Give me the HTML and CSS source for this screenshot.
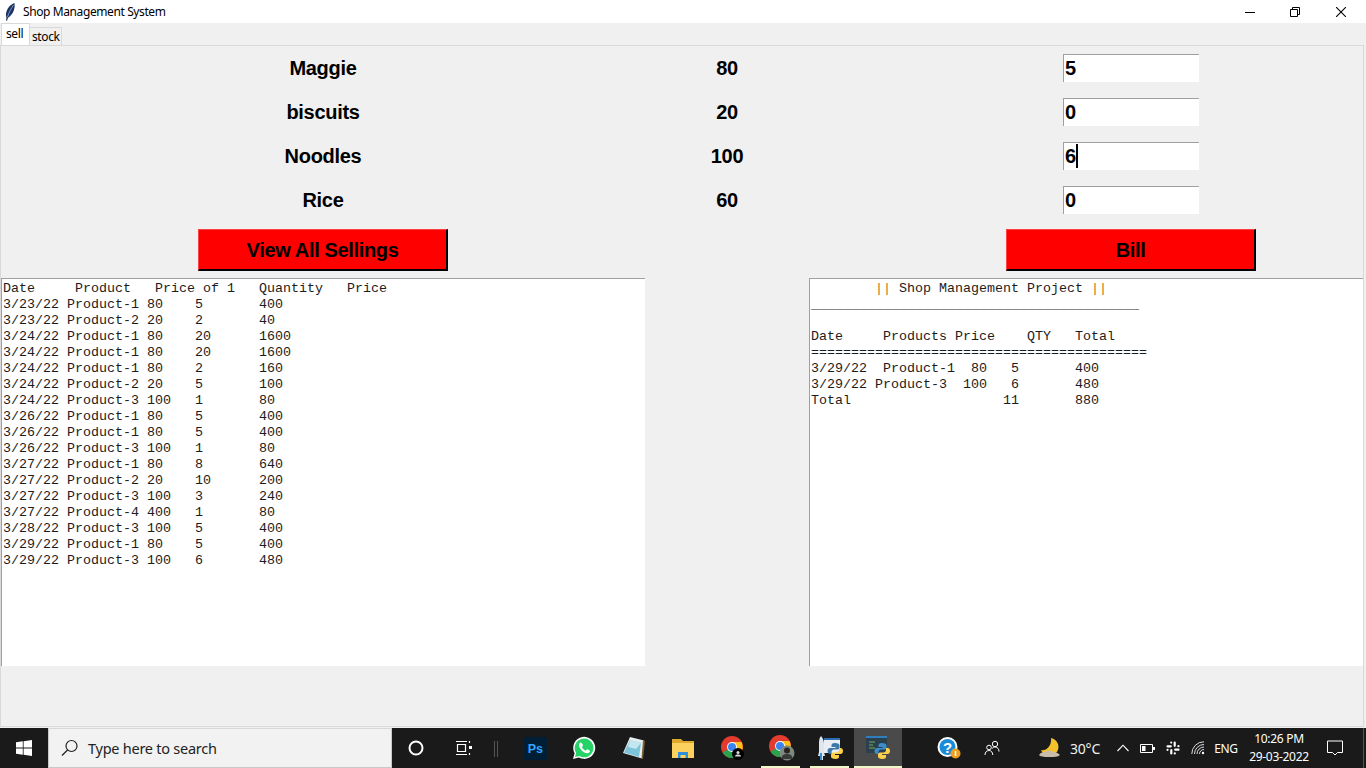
FILE: index.html
```html
<!DOCTYPE html>
<html lang="en">
<head>
  <meta charset="UTF-8" />
  <title>Shop Management System</title>
  <link rel="stylesheet" href="styles.css">
</head>
<body>
  <div class="titlebar">
    <svg class="feather" width="16" height="18" viewBox="0 0 16 18">
      <path d="M12.500 0C8 1.500 4.500 6 4 11c-.1 1.500 0 2.500.5 3.500L4 17.500l1 .3 1-3C10 12 13.500 7 12.500 0z" fill="#1c3260"/>
      <path d="M11.500 2C9.500 5 7 9 5.500 14" stroke="#7fa6e0" stroke-width=".9" fill="none"/>
    </svg>
    <span class="title">Shop Management System</span>
    <div class="winbtns">
      <svg width="10" height="10" viewBox="0 0 10 10"><path d="M0 5.500h10" stroke="#000"/></svg>
      <svg width="10" height="10" viewBox="0 0 10 10"><path d="M.5 2.500h7v7h-7zM2.500 2.500V.5h7v7H7.500" stroke="#000" fill="none"/></svg>
      <svg width="10" height="10" viewBox="0 0 10 10"><path d="M0 0l10 10M10 0L0 10" stroke="#000" stroke-width="1.100"/></svg>
    </div>
  </div>

  <div class="tabs">
    <div class="tab active">sell</div>
    <div class="tab">stock</div>
  </div>

  <div class="pane">
    <div class="sheet">
      <div class="cell name">Maggie</div>
      <div class="cell name">80</div>
      <div class="cell"><div class="entry">5</div></div>

      <div class="cell name">biscuits</div>
      <div class="cell name">20</div>
      <div class="cell"><div class="entry">0</div></div>

      <div class="cell name">Noodles</div>
      <div class="cell name">100</div>
      <div class="cell"><div class="entry">6<span class="caret"></span></div></div>

      <div class="cell name">Rice</div>
      <div class="cell name">60</div>
      <div class="cell"><div class="entry">0</div></div>

      <div class="cell btnrow"><button class="btn">View All Sellings</button></div>
      <div class="cell btnrow"></div>
      <div class="cell btnrow"><button class="btn">Bill</button></div>

      <pre class="box">Date     Product   Price of 1   Quantity   Price
3/23/22 Product-1 80    5       400
3/23/22 Product-2 20    2       40
3/24/22 Product-1 80    20      1600
3/24/22 Product-1 80    20      1600
3/24/22 Product-1 80    2       160
3/24/22 Product-2 20    5       100
3/24/22 Product-3 100   1       80
3/26/22 Product-1 80    5       400
3/26/22 Product-1 80    5       400
3/26/22 Product-3 100   1       80
3/27/22 Product-1 80    8       640
3/27/22 Product-2 20    10      200
3/27/22 Product-3 100   3       240
3/27/22 Product-4 400   1       80
3/28/22 Product-3 100   5       400
3/29/22 Product-1 80    5       400
3/29/22 Product-3 100   6       480</pre>
      <div></div>
      <pre class="box">        <span class="bars">||</span> Shop Management Project <span class="bars">||</span>
_________________________________________

Date     Products Price    QTY   Total
==========================================
3/29/22  Product-1  80   5       400
3/29/22 Product-3  100   6       480
Total                   11       880</pre>
    </div>
  </div>

  <div class="taskbar">
    <div class="tb start">
      <svg width="16" height="16" viewBox="0 0 16 16"><path d="M0 2.300l6.800-1v6.300H0zM7.600 1.200L16 0v7.600H7.600zM0 8.400h6.800v6.300l-6.800-1zM7.600 8.400H16V16l-8.400-1.200z" fill="#fff"/></svg>
    </div>
    <div class="search">
      <svg width="18" height="18" viewBox="0 0 18 18"><circle cx="10.500" cy="7" r="5.500" fill="none" stroke="#222" stroke-width="1.200"/><path d="M6.500 11L1 16.500" stroke="#222" stroke-width="1.300"/></svg>
      <span>Type here to search</span>
    </div>
    <div class="tb">
      <svg width="16" height="16" viewBox="0 0 16 16"><circle cx="8" cy="8" r="6.500" fill="none" stroke="#fff" stroke-width="2"/></svg>
    </div>
    <div class="tb">
      <svg width="18" height="16" viewBox="0 0 18 16"><path d="M1 1.500h11M1 14.500h11M2.500 4.500h8v7h-8z" fill="none" stroke="#fff" stroke-width="1.200"/><path d="M14.500 1v2M14.500 13v2" stroke="#fff" stroke-width="1.200"/><rect x="14" y="6" width="3" height="3" fill="#fff"/></svg>
    </div>
    <div class="divider"></div>

    <div class="app">
      <svg width="23" height="23" viewBox="0 0 24 24"><rect width="24" height="24" rx="3" fill="#001e36"/><text x="4" y="17" class="ps">Ps</text></svg>
    </div>
    <div class="app shift-left">
      <svg width="24" height="24" viewBox="0 0 24 24"><path d="M1 23l1.600-5.800A11 11 0 1 1 6.900 21.500z" fill="#fff"/><path d="M3 21l1.100-4.100A9.400 9.400 0 1 1 7.300 20z" fill="#25d366"/><path d="M8.800 6.500c-.6 0-1.800 1-1.800 2.800 0 3 4.500 8 8.200 8 1.600 0 2.800-1.200 2.800-2.200 0-.5-2.300-1.800-2.700-1.800-.5 0-1 1.300-1.500 1.300-1 0-3.800-2.600-3.800-3.600 0-.5 1-.9 1-1.500 0-.4-1.200-3-2.200-3z" fill="#fff"/></svg>
    </div>
    <div class="app">
      <svg width="24" height="24" viewBox="0 0 24 24"><path d="M8 1l14 3.500-2 18L1 17z" fill="#e8eef0"/><path d="M21 4l2 1-2 18-1.500-.5z" fill="#7a6238"/><path d="M8 4l11 3-2 14L2 16.500z" fill="#7cc4d8"/><path d="M8 4l11 3-5 6-8-2z" fill="#c4e6ee"/></svg>
    </div>
    <div class="app">
      <svg width="22" height="20" viewBox="0 0 22 20"><path d="M0 1h9l2 2h11v3H0z" fill="#e0a92c"/><path d="M0 5h22v15H0z" fill="#fcd15e"/><path d="M6 20v-6h10v6h-2.500v-3h-5v3z" fill="#2f8fd8"/></svg>
    </div>
    <div class="app">
      <svg class="chrome" width="24" height="24" viewBox="0 0 24 24"><circle cx="11" cy="11" r="11" fill="#e33b2e"/><path d="M11 11L1.500 16.500A11 11 0 0 0 11 22a11 11 0 0 0 2-.2z" fill="#2ba24c"/><path d="M11 6h9.500A11 11 0 0 1 13 21.800L11 11z" fill="#fbc116"/><circle cx="11" cy="11" r="5" fill="#fff"/><circle cx="11" cy="11" r="4" fill="#3c83ee"/><circle cx="17" cy="18" r="6" fill="#000"/><circle cx="17" cy="16.500" r="1.500" fill="#ddd"/><path d="M14 20.500c0-1.500 1.500-2 3-2s3 .5 3 2z" fill="#ddd"/></svg>
    </div>
    <div class="app">
      <svg class="chrome" width="26" height="26" viewBox="0 0 26 26"><circle cx="11" cy="11" r="11" fill="#e33b2e"/><path d="M11 11L1.500 16.500A11 11 0 0 0 11 22a11 11 0 0 0 2-.2z" fill="#2ba24c"/><path d="M11 6h9.500A11 11 0 0 1 13 21.800L11 11z" fill="#fbc116"/><circle cx="11" cy="11" r="5" fill="#fff"/><circle cx="11" cy="11" r="4" fill="#3c83ee"/><circle cx="18" cy="18" r="7.500" fill="#7c8a80"/><circle cx="18" cy="15.500" r="3" fill="#2a2320"/><path d="M12.500 24c0-4 2.500-5 5.500-5s5.500 1 5.500 5z" fill="#3a3a3a"/></svg>
      <i class="running"></i>
    </div>
    <div class="app">
      <svg width="28" height="24" viewBox="0 0 28 24"><rect x="8" y="2" width="16" height="15" fill="#e8eef4"/><rect x="8" y="2" width="16" height="2" fill="#2c6fb0"/><path d="M5 0c2 2 3 5 3 8v8l1 4H7v4H4v-4H2l1-4V8c0-3 0-6 2-8z" fill="#dfe6ee"/><rect x="4" y="17" width="2" height="7" fill="#3a8fd0"/><path d="M19 7c-3 0-3.500 1-3.500 2.500V11h4v1H14c-1.500 0-2.500 1-2.500 3s1 3 2.500 3h1.500v-2c0-1.500 1-2.500 2.500-2.500h3.500c1 0 2-1 2-2v-2C23.500 8 22 7 19 7z" fill="#3c78aa"/><path d="M19.500 23c3 0 3.500-1 3.500-2.500V19h-4v-1h5.500c1.500 0 2.500-1 2.500-3s-1-3-2.500-3H23v2c0 1.500-1 2.500-2.500 2.500H17c-1 0-2 1-2 2v2c0 1.500 1.500 2.500 4.500 2.500z" fill="#fdd04a"/></svg>
      <i class="running"></i>
    </div>
    <div class="app current">
      <svg width="26" height="26" viewBox="0 0 26 26"><rect x="1" y="1" width="21" height="17" fill="#2c3f4c"/><rect x="1" y="1" width="21" height="2" fill="#2f7ebd"/><path d="M4 7h6M4 10h4M4 13h6" stroke="#6fae5a" stroke-width="1.200"/><path d="M17 8c-3 0-3.500 1-3.500 2.500V12h4v1h-5.500c-1.500 0-2.500 1-2.500 3s1 3 2.500 3h1.500v-2c0-1.500 1-2.500 2.500-2.500h3.500c1 0 2-1 2-2v-2C21.500 9 20 8 17 8z" fill="#3c8ccc"/><path d="M17.500 24c3 0 3.500-1 3.500-2.500V20h-4v-1h5.500c1.500 0 2.500-1 2.500-3s-1-3-2.500-3H21v2c0 1.500-1 2.500-2.500 2.500H15c-1 0-2 1-2 2v2c0 1.500 1.500 2.500 4.500 2.500z" fill="#fdd04a"/></svg>
      <i class="running"></i>
    </div>

    <div class="tray">
      <div class="ti help">
        <svg width="24" height="24" viewBox="0 0 24 24"><circle cx="10.500" cy="11" r="10" fill="#fff"/><circle cx="10.500" cy="11" r="8" fill="#1a8bd8"/><text x="6" y="16.500" class="qm">?</text><circle cx="18.500" cy="17.500" r="5" fill="#f0a020"/><path d="M18.500 15v5" stroke="#fff" stroke-width="1.500"/></svg>
      </div>
      <div class="ti people">
        <svg width="16" height="16" viewBox="0 0 16 16"><circle cx="11" cy="4" r="2.700" fill="none" stroke="#fff"/><circle cx="5" cy="7.500" r="2.300" fill="none" stroke="#fff"/><path d="M1 15c0-3 1.800-4.500 4-4.500s3.500 1.500 3.800 4.500M8 8.500c1-.8 2-1.500 3-1.500 2.500 0 4 2 4 4.500" fill="none" stroke="#fff"/></svg>
      </div>
      <div class="ti weather">
        <svg width="24" height="22" viewBox="0 0 24 22"><path d="M13 1a9 9 0 1 1-10 12c5 1.500 11-4 10-12z" fill="#f6c22c"/><path d="M1 18c2-3 4-3 6-3 2-2 6-2 8 0 3 0 5 1 7 3-2 2-6 2-10 2s-9 0-11-2z" fill="#c9bcaa"/></svg>
        <span>30°C</span>
      </div>
      <div class="ti small">
        <svg width="12" height="8" viewBox="0 0 12 8"><path d="M.5 7L6 1.200 11.500 7" fill="none" stroke="#fff" stroke-width="1.100"/></svg>
      </div>
      <div class="ti small">
        <svg width="15" height="9" viewBox="0 0 15 9"><path d="M.5.5h12v8H.5z" fill="none" stroke="#fff"/><rect x="2" y="2" width="3.500" height="5" fill="#fff"/><rect x="13" y="3" width="2" height="3" fill="#fff"/></svg>
      </div>
      <div class="ti small">
        <svg width="14" height="14" viewBox="0 0 14 14" fill="none" stroke="#fff" stroke-width="2.200" stroke-linecap="round"><path d="M1.500 5.300h3.300M5.200 1.500v.1M8.700 1.500v3.300M12.500 5.200h-.1M12.500 8.700H9.200M8.800 12.500v-.1M5.300 12.500V9.200M1.500 8.800h.1"/></svg>
      </div>
      <div class="ti small">
        <svg width="14" height="14" viewBox="0 0 14 14" fill="none" stroke="#ddd"><path d="M.8 13A12 12 0 0 1 13 .8M3.500 13A9.500 9.500 0 0 1 13 3.500M6 13a7 7 0 0 1 7-7M8.500 13a4.500 4.500 0 0 1 4.500-4.500"/><circle cx="12" cy="12" r="1.200" fill="#fff" stroke="none"/></svg>
      </div>
      <div class="ti eng">ENG</div>
      <div class="ti clock"><span>10:26 PM</span><span>29-03-2022</span></div>
      <div class="ti notif">
        <svg width="16" height="16" viewBox="0 0 16 16"><path d="M.5 1h15v11.500h-5L8 15l-2.500-2.500h-5z" fill="none" stroke="#fff"/></svg>
      </div>
      <div class="desktop"></div>
    </div>
  </div>
</body>
</html>
```

FILE: styles.css
```css
body { margin: 0; width: 1366px; height: 768px; overflow: hidden; background: #f0f0f0; font-family: "Noto Sans", sans-serif; display: flex; flex-direction: column; }

.titlebar { height: 23px; background: #fff; display: flex; align-items: center; padding-left: 2px; }
.feather { margin-right: 5px; }
.title { font-size: 12px; color: #000; letter-spacing: -0.4px; }
.winbtns { margin-left: auto; display: flex; padding-right: 2px; }
.winbtns svg { width: 10px; margin: 0 18px; }
.winbtns svg:nth-child(2) { margin: 0 18px 0 17px; }

.tabs { height: 22px; display: flex; align-items: flex-end; padding-left: 1px; }
.tab { font-size: 12px; color: #000; background: #f0f0f0; border: 1px solid #d9d9d9; border-bottom: 0; height: 17px; line-height: 17px; padding: 0 1px 0 2px; letter-spacing: -0.4px; }
.tab.active { background: #fff; height: 21px; line-height: 19px; padding: 0 4px; width: 19px; margin-right: -1px; position: relative; z-index: 1; }

.pane { width: 1362px; height: 680px; flex: none; margin-bottom: 1px; border: 1px solid #d9d9d9; overflow: hidden; }
.sheet { display: grid; grid-template-columns: 644px 164px 644px; grid-template-rows: repeat(4, 44px) 56px 388px; }
.cell { display: flex; align-items: center; justify-content: center; }
.name { font: bold 20px "Liberation Sans", sans-serif; color: #000; letter-spacing: -0.3px; }

.entry { width: 134px; height: 27px; background: #fff; border-top: 1px solid #a0a0a0; border-left: 1px solid #a0a0a0; font: bold 20px/26px "Liberation Sans", sans-serif; padding-left: 1px; display: flex; }
.caret { width: 2px; background: #000; height: 24px; margin-top: 1px; }

.btn { width: 250px; height: 42px; background: #f00; color: #000; font: bold 20px "Liberation Sans", sans-serif; letter-spacing: -0.35px; padding: 2px 0 0; border: 1px solid; border-color: #ff4040 #000 #000 #ff4040; border-bottom-width: 2px; border-right-width: 2px; }

.box { margin: 0; padding: 2px 0 0 1px; background: #fff; border-top: 1px solid #a0a0a0; border-left: 1px solid #a0a0a0; font: 13.33px/16px "Liberation Mono", monospace; color: #1c1c1c; height: 385px; overflow: hidden; }
.bars { color: #b8741a; }

.taskbar { height: 40px; background: #1a1a1a; display: flex; align-items: stretch; }
.tb { width: 48px; display: flex; align-items: center; justify-content: center; }
.search { width: 344px; background: #f2f2f2; border: 1px solid #c8c8c8; border-top-color: #d8d8d8; display: flex; align-items: center; padding-left: 12px; box-sizing: border-box; color: #222; font-size: 14.5px; letter-spacing: -0.25px; gap: 9px; }
.divider { width: 4px; height: 16px; margin: 13px 13px 0 6px; border-left: 1px solid #555; border-right: 1px solid #555; box-sizing: border-box; }
.app { width: 49px; display: flex; align-items: center; justify-content: center; position: relative; }
.app.current { background: #4a4a4a; width: 48px; }
.shift-left svg { margin-right: 2px; }
.chrome { margin-left: 2px; }
.running { position: absolute; left: 5px; right: 5px; bottom: 0; height: 2px; background: #eef8c8; }
.app.current .running { left: 0; right: 0; }
.ps { font: bold 13px "Liberation Sans", sans-serif; fill: #31a8ff; }
.qm { font: bold 15px "Liberation Sans", sans-serif; fill: #fff; }

.tray { display: flex; align-items: center; color: #fff; margin-left: 25px; height: 100%; }
.ti { display: flex; align-items: center; justify-content: center; }
.help { width: 44px; }
.people { width: 42px; }
.weather { width: 97px; font-size: 14px; letter-spacing: -0.2px; gap: 8px; color: #f0f0f0; justify-content: flex-start; padding-left: 25px; box-sizing: border-box; }
.small { width: 25px; }
.eng { width: 32px; font-size: 12px; letter-spacing: -0.3px; }
.clock { width: 74px; flex-direction: column; font-size: 12px; letter-spacing: -0.3px; line-height: 18px; }
.notif { width: 38px; }
.desktop { width: 1px; height: 100%; background: #555; margin-left: 9px; }
```
